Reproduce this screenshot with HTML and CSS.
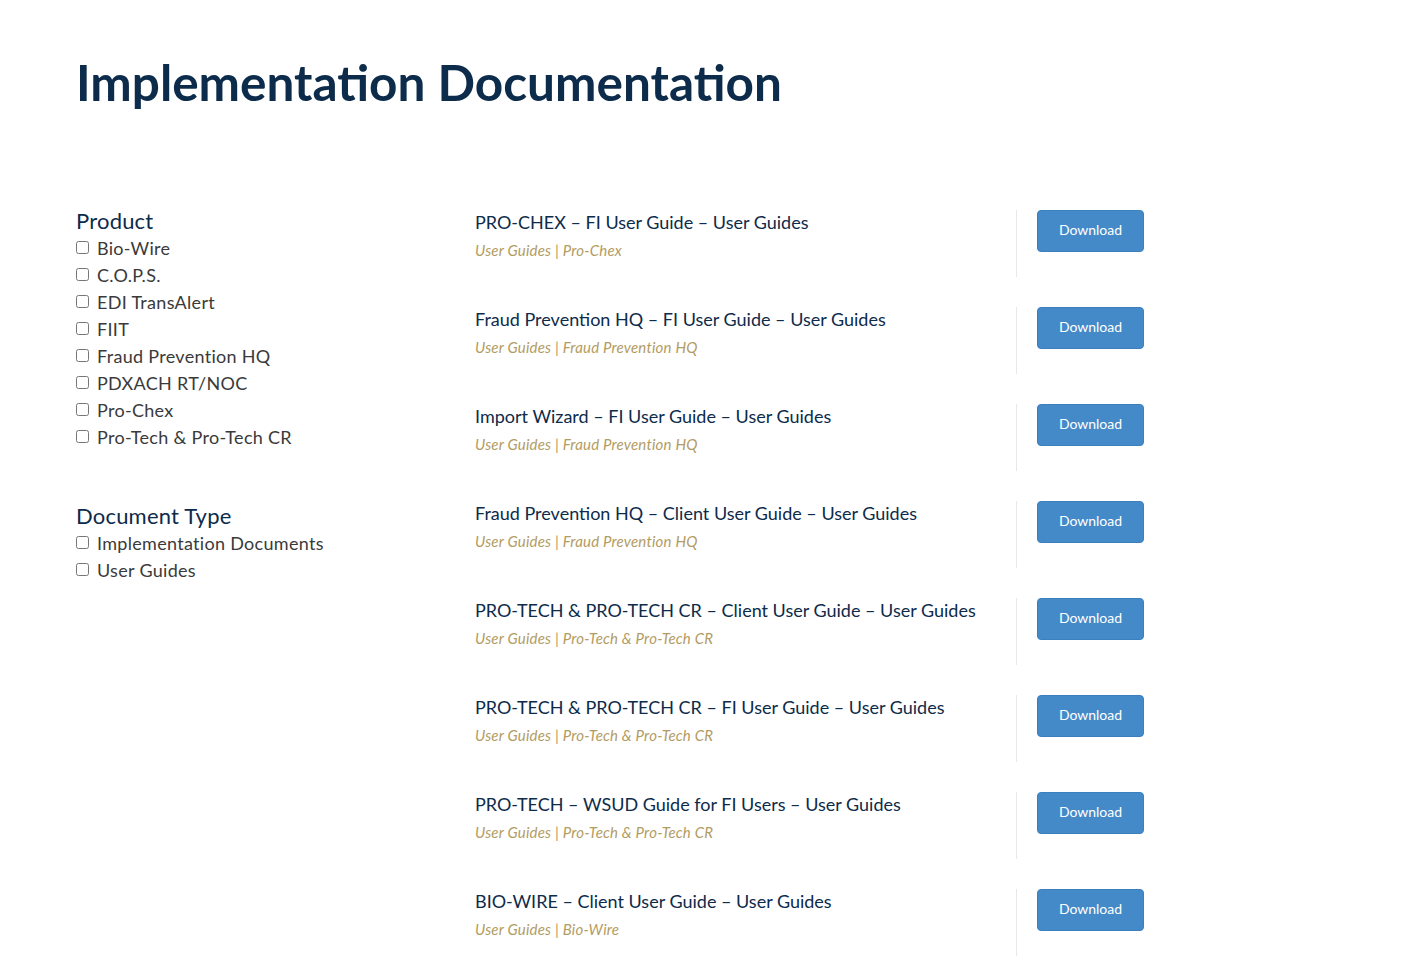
FILE: index.html
```html
<!DOCTYPE html>
<html lang="en">
<head>
<meta charset="utf-8">
<title>Implementation Documentation</title>
<link rel="stylesheet" href="styles.css">
</head>
<body>
<div class="page">
  <h1 class="title">Implementation Documentation</h1>
  <div class="layout">
    <aside class="filters">
      <div class="group">
        <h2 class="group-title">Product</h2>
        <label class="opt"><input type="checkbox"><span>Bio-Wire</span></label>
        <label class="opt"><input type="checkbox"><span>C.O.P.S.</span></label>
        <label class="opt"><input type="checkbox"><span>EDI TransAlert</span></label>
        <label class="opt"><input type="checkbox"><span>FIIT</span></label>
        <label class="opt"><input type="checkbox"><span>Fraud Prevention HQ</span></label>
        <label class="opt"><input type="checkbox"><span>PDXACH RT/NOC</span></label>
        <label class="opt"><input type="checkbox"><span>Pro-Chex</span></label>
        <label class="opt"><input type="checkbox"><span>Pro-Tech &amp; Pro-Tech CR</span></label>
      </div>
      <div class="group">
        <h2 class="group-title">Document Type</h2>
        <label class="opt"><input type="checkbox"><span>Implementation Documents</span></label>
        <label class="opt"><input type="checkbox"><span>User Guides</span></label>
      </div>
    </aside>
    <main class="docs">
      <div class="doc">
        <div class="doc-info"><div class="doc-title">PRO-CHEX – FI User Guide – User Guides</div><div class="doc-meta">User Guides | Pro-Chex</div></div>
        <div class="doc-action"><a class="btn" href="#">Download</a></div>
      </div>
      <div class="doc">
        <div class="doc-info"><div class="doc-title">Fraud Prevention HQ – FI User Guide – User Guides</div><div class="doc-meta">User Guides | Fraud Prevention HQ</div></div>
        <div class="doc-action"><a class="btn" href="#">Download</a></div>
      </div>
      <div class="doc">
        <div class="doc-info"><div class="doc-title">Import Wizard – FI User Guide – User Guides</div><div class="doc-meta">User Guides | Fraud Prevention HQ</div></div>
        <div class="doc-action"><a class="btn" href="#">Download</a></div>
      </div>
      <div class="doc">
        <div class="doc-info"><div class="doc-title">Fraud Prevention HQ – Client User Guide – User Guides</div><div class="doc-meta">User Guides | Fraud Prevention HQ</div></div>
        <div class="doc-action"><a class="btn" href="#">Download</a></div>
      </div>
      <div class="doc">
        <div class="doc-info"><div class="doc-title">PRO-TECH &amp; PRO-TECH CR – Client User Guide – User Guides</div><div class="doc-meta">User Guides | Pro-Tech &amp; Pro-Tech CR</div></div>
        <div class="doc-action"><a class="btn" href="#">Download</a></div>
      </div>
      <div class="doc">
        <div class="doc-info"><div class="doc-title">PRO-TECH &amp; PRO-TECH CR – FI User Guide – User Guides</div><div class="doc-meta">User Guides | Pro-Tech &amp; Pro-Tech CR</div></div>
        <div class="doc-action"><a class="btn" href="#">Download</a></div>
      </div>
      <div class="doc">
        <div class="doc-info"><div class="doc-title">PRO-TECH – WSUD Guide for FI Users – User Guides</div><div class="doc-meta">User Guides | Pro-Tech &amp; Pro-Tech CR</div></div>
        <div class="doc-action"><a class="btn" href="#">Download</a></div>
      </div>
      <div class="doc">
        <div class="doc-info"><div class="doc-title">BIO-WIRE – Client User Guide – User Guides</div><div class="doc-meta">User Guides | Bio-Wire</div></div>
        <div class="doc-action"><a class="btn" href="#">Download</a></div>
      </div>
    </main>
  </div>
</div>
</body>
</html>
```

FILE: styles.css
```css
* { box-sizing: border-box; }
html, body { margin: 0; padding: 0; background: #fff; }
body {
  font-family: "Lato", "Noto Sans", sans-serif;
  color: #0d2b4a;
}
.page {
  padding: 52px 0 0 76px;
}
.title {
  margin: 0;
  font-size: 49.5px;
  line-height: 60px;
  font-weight: 700;
  color: #0d2b4a;
  letter-spacing: 0;
}
.layout {
  display: flex;
  margin-top: 95px;
}
.filters {
  width: 399px;
  flex: none;
}
.group { margin-bottom: 52px; }
.group-title {
  margin: 0 0 -1px;
  font-size: 22px;
  line-height: 28px;
  font-weight: 400;
  color: #0d2b4a;
  letter-spacing: 0.2px;
}
.opt {
  display: flex;
  align-items: center;
  height: 27px;
  font-size: 18px;
  color: #3a3a3a;
  letter-spacing: 0.3px;
}
.opt input {
  width: 13px;
  height: 13px;
  margin: 0 8px 0 0;
}
.docs {
  display: flex;
  flex-direction: column;
  padding-top: 3px;
}
.doc {
  display: flex;
  height: 97px;
}
.doc-info {
  width: 541px;
}
.doc-title {
  font-size: 18px;
  line-height: 24px;
  color: #0d2b4a;
}
.doc-meta {
  margin-top: 7px;
  font-size: 15px;
  line-height: 18px;
  font-style: italic;
  color: #b39c63;
  letter-spacing: 0.2px;
}
.doc-action {
  height: 67px;
  border-left: 1px solid #e8e8e8;
  padding-left: 20px;
}
.btn {
  display: flex;
  align-items: center;
  justify-content: center;
  width: 107px;
  height: 42px;
  padding-bottom: 3px;
  background: #448ac9;
  border: 1px solid #3b7fbd;
  border-radius: 4px;
  color: #fff;
  font-size: 14px;
  text-decoration: none;
}
```
